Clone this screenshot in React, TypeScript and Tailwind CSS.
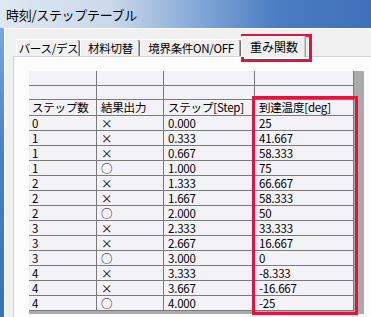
import React from "react";

type Row = [string, string, string, string];

const rows: Row[] = [
  ["0", "×", "0.000", "25"],
  ["1", "×", "0.333", "41.667"],
  ["1", "×", "0.667", "58.333"],
  ["1", "○", "1.000", "75"],
  ["2", "×", "1.333", "66.667"],
  ["2", "×", "1.667", "58.333"],
  ["2", "○", "2.000", "50"],
  ["3", "×", "2.333", "33.333"],
  ["3", "×", "2.667", "16.667"],
  ["3", "○", "3.000", "0"],
  ["4", "×", "3.333", "-8.333"],
  ["4", "×", "3.667", "-16.667"],
  ["4", "○", "4.000", "-25"],
];

const header: Row = ["ステップ数", "結果出力", "ステップ[Step]", "到達温度[deg]"];

function Cell({ text, col, h }: { text: string; col: number; h: string }) {
  return (
    <div
      className={
        "flex items-center overflow-hidden whitespace-nowrap border-b border-r border-[#7a7a7a] bg-[#f3f2f6] text-[11.5px] leading-[13px] tracking-[-0.2px] text-black " +
        h +
        (col === 0 ? " pl-[3px]" : " pl-[4px]")
      }
    >
      {text}
    </div>
  );
}

function Tab({ label, width, selected }: { label: string; width: string; selected?: boolean }) {
  if (selected) {
    return (
      <div
        className={
          "relative z-10 -mb-px flex h-[21px] items-center justify-center whitespace-nowrap rounded-t-[2px] border-l border-t border-white bg-[#f0f0f0] pb-[2px] shadow-[inset_-1px_0_0_#a0a0a0,inset_-2px_0_0_#c8c8c8] " +
          width
        }
      >
        <span className="text-[12px] leading-[13px]">{label}</span>
      </div>
    );
  }
  return (
    <div
      className={
        "flex h-[17px] items-center justify-center whitespace-nowrap rounded-t-[2px] border-l border-t border-white bg-[#f0f0f0] shadow-[inset_-1px_0_0_#707070,inset_-2px_0_0_#a8a8a8] " +
        width
      }
    >
      <span className="text-[11.5px] leading-[13px] tracking-[-0.3px]">{label}</span>
    </div>
  );
}

export default function App() {
  return (
    <div
      className="relative h-[317px] w-[371px] overflow-hidden bg-[#f0f0f0] text-black"
      style={{ fontFamily: '"Noto Sans CJK JP", "Noto Sans", sans-serif' }}
    >
      {/* title bar */}
      <div className="flex h-[28px] items-center bg-[linear-gradient(90deg,#dfe8f2_0%,#c9d8ea_30%,#7fa4d6_55%,#4a7cc2_75%,#3f70b9_100%)] pl-[6px]">
        <span className="text-[13px] leading-[15px] tracking-[-0.3px]">時刻/ステップテーブル</span>
      </div>

      <div className="flex h-[289px]">
        <div className="w-[4px] bg-[linear-gradient(180deg,#7ea5d8_0%,#4f80c4_40%,#3e6fb8_100%)]" />
        <div className="flex flex-1 flex-col border-l border-t border-white bg-[#f0f0f0] pl-[8px]">
          {/* tab strip */}
          <div className="mt-[6px] flex h-[21px] items-end pl-[3px]">
            <Tab label="バース/デス" width="w-[64px]" />
            <Tab label="材料切替" width="w-[60px]" />
            <Tab label="境界条件ON/OFF" width="w-[101px]" />
            <Tab label="重み関数" width="w-[65px]" selected />
          </div>

          {/* tab page */}
          <div className="flex-1 border-l border-t border-[#d4d4d4] bg-[#fcfcfc] pl-[15px] pt-[14px]">
            <div className="h-[243px] w-[335px] bg-[#ababab]">
              <div className="grid w-[325px] grid-cols-[68px_67px_91px_99px]">
                {[0, 1, 2, 3].map((c) => (
                  <Cell key={"a" + c} text="" col={c} h="h-[15px]" />
                ))}
                {[0, 1, 2, 3].map((c) => (
                  <Cell key={"b" + c} text="" col={c} h="h-[14px]" />
                ))}
                {header.map((t, c) => (
                  <Cell key={"h" + c} text={t} col={c} h="h-[16px]" />
                ))}
                {rows.map((r, i) =>
                  r.map((t, c) => <Cell key={i + "-" + c} text={t} col={c} h="h-[15px]" />)
                )}
              </div>
            </div>
          </div>
        </div>
      </div>

      {/* annotation boxes */}
      <div className="absolute left-[241px] top-[34px] h-[28px] w-[71px] border-[3px] border-[#e5123d]" />
      <div className="absolute left-[252px] top-[96px] h-[219px] w-[106px] border-[3px] border-[#e5123d]" />
    </div>
  );
}
